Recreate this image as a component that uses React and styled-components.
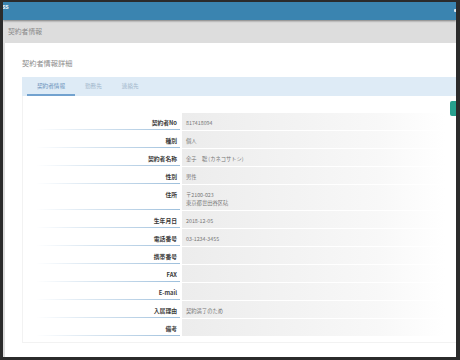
import React from "react";
import styled, { createGlobalStyle } from "styled-components";

const GlobalStyle = createGlobalStyle`
  html, body {
    margin: 0;
    padding: 0;
    background: #2b2b2b;
    width: 460px;
    height: 360px;
    overflow: hidden;
  }
  * {
    box-sizing: border-box;
  }
`;

const Shell = styled.div`
  width: 453px;
  height: 355px;
  margin: 2px 0 0 3px;
  background: #dddddd;
  overflow: hidden;
  display: flex;
  flex-direction: column;
  font-family: "Noto Sans CJK JP", "Noto Sans", sans-serif;
`;

const TopBar = styled.div`
  height: 18px;
  flex: none;
  background: #3a84b0;
  box-shadow: 0 1px 2px rgba(0, 0, 0, 0.45);
  display: flex;
  justify-content: space-between;
  align-items: flex-start;
  position: relative;
  z-index: 1;
`;

const Brand = styled.span`
  color: #ffffff;
  font-family: "Liberation Sans", sans-serif;
  font-weight: 700;
  font-size: 5px;
  line-height: 5px;
  margin: 3px 0 0 -1px;
`;

const BarIcon = styled.span`
  width: 3px;
  height: 3px;
  margin: 7px -1px 0 0;
  background: #dfeaf3;
  border-radius: 1px;
`;

const Crumb = styled.div`
  height: 23px;
  flex: none;
  padding: 0 0 1px 5px;
  display: flex;
  align-items: center;
  color: #8a8a8a;
  font-size: 6.8px;
`;

const Panel = styled.div`
  flex: 1;
  margin-left: 2px;
  background: #ffffff;
  padding: 15px 0 0 17px;
  width: 460px;
`;

const Title = styled.h2`
  margin: 0 0 8px;
  font-size: 7.2px;
  font-weight: 400;
  line-height: 11px;
  color: #8c8c8c;
`;

const TabBar = styled.div`
  height: 19px;
  background: #deebf6;
  display: flex;
  align-items: stretch;
  padding-left: 5px;
  width: 460px;
`;

const Tab = styled.div`
  padding: 1px 10px 0;
  display: flex;
  align-items: center;
  font-size: 5.6px;
  color: ${(p) => (p.$active ? "#6b93bb" : "#a3b8cc")};
  border-bottom: 2px solid ${(p) => (p.$active ? "#72a2cf" : "transparent")};
`;

const Card = styled.div`
  position: relative;
  width: 440px;
  border: 1px solid #f2f2f2;
  border-top: none;
  padding: 17px 18px 6px 8px;
`;

const Sync = styled.span`
  position: absolute;
  top: 5px;
  left: 427px;
  width: 14px;
  height: 15px;
  background: #27a08e;
  border-radius: 2px;
`;

const Grid = styled.div`
  display: grid;
  grid-template-columns: 149px 263px;
  column-gap: 2px;
  row-gap: 1px;
`;

const Label = styled.div`
  height: ${(p) => (p.$tall ? "25px" : "17px")};
  padding: 6px 3px 0 0;
  text-align: right;
  font-size: 5.8px;
  line-height: 8px;
  font-weight: 700;
  color: #3a3a3a;
  background: linear-gradient(to right, rgba(157, 191, 220, 0), #9dbfdc) bottom
    right / 144px 1px no-repeat;
`;

const Value = styled.div`
  height: ${(p) => (p.$tall ? "25px" : "17px")};
  display: flex;
  flex-direction: column;
  padding: 6px 0 0 4px;
  font-size: 5.3px;
  line-height: 8px;
  color: #777777;
  background: linear-gradient(to right, #ececec, #f8f8f8 75%, #ffffff);
`;

const rows = [
  ["契約者No", ["817418094"]],
  ["種別", ["個人"]],
  ["契約者名称", ["金子\u3000聡 (カネコサトシ)"]],
  ["性別", ["男性"]],
  ["住所", ["〒2100-023", "東京都世田谷区砧"]],
  ["生年月日", ["2018-12-05"]],
  ["電話番号", ["03-1234-3455"]],
  ["携帯番号", []],
  ["FAX", []],
  ["E-mail", []],
  ["入居理由", ["契約満了のため"]],
  ["備考", []],
];

export default function App() {
  return (
    <>
      <GlobalStyle />
      <Shell>
        <TopBar>
          <Brand>SS</Brand>
          <BarIcon />
        </TopBar>
        <Crumb>契約者情報</Crumb>
        <Panel>
          <Title>契約者情報詳細</Title>
          <TabBar>
            <Tab $active>契約者情報</Tab>
            <Tab>勤務先</Tab>
            <Tab>連絡先</Tab>
          </TabBar>
          <Card>
            <Sync />
            <Grid>
              {rows.map(([label, lines]) => (
                <React.Fragment key={label}>
                  <Label $tall={lines.length > 1}>{label}</Label>
                  <Value $tall={lines.length > 1}>
                    {lines.map((l) => (
                      <span key={l}>{l}</span>
                    ))}
                  </Value>
                </React.Fragment>
              ))}
            </Grid>
          </Card>
        </Panel>
      </Shell>
    </>
  );
}
